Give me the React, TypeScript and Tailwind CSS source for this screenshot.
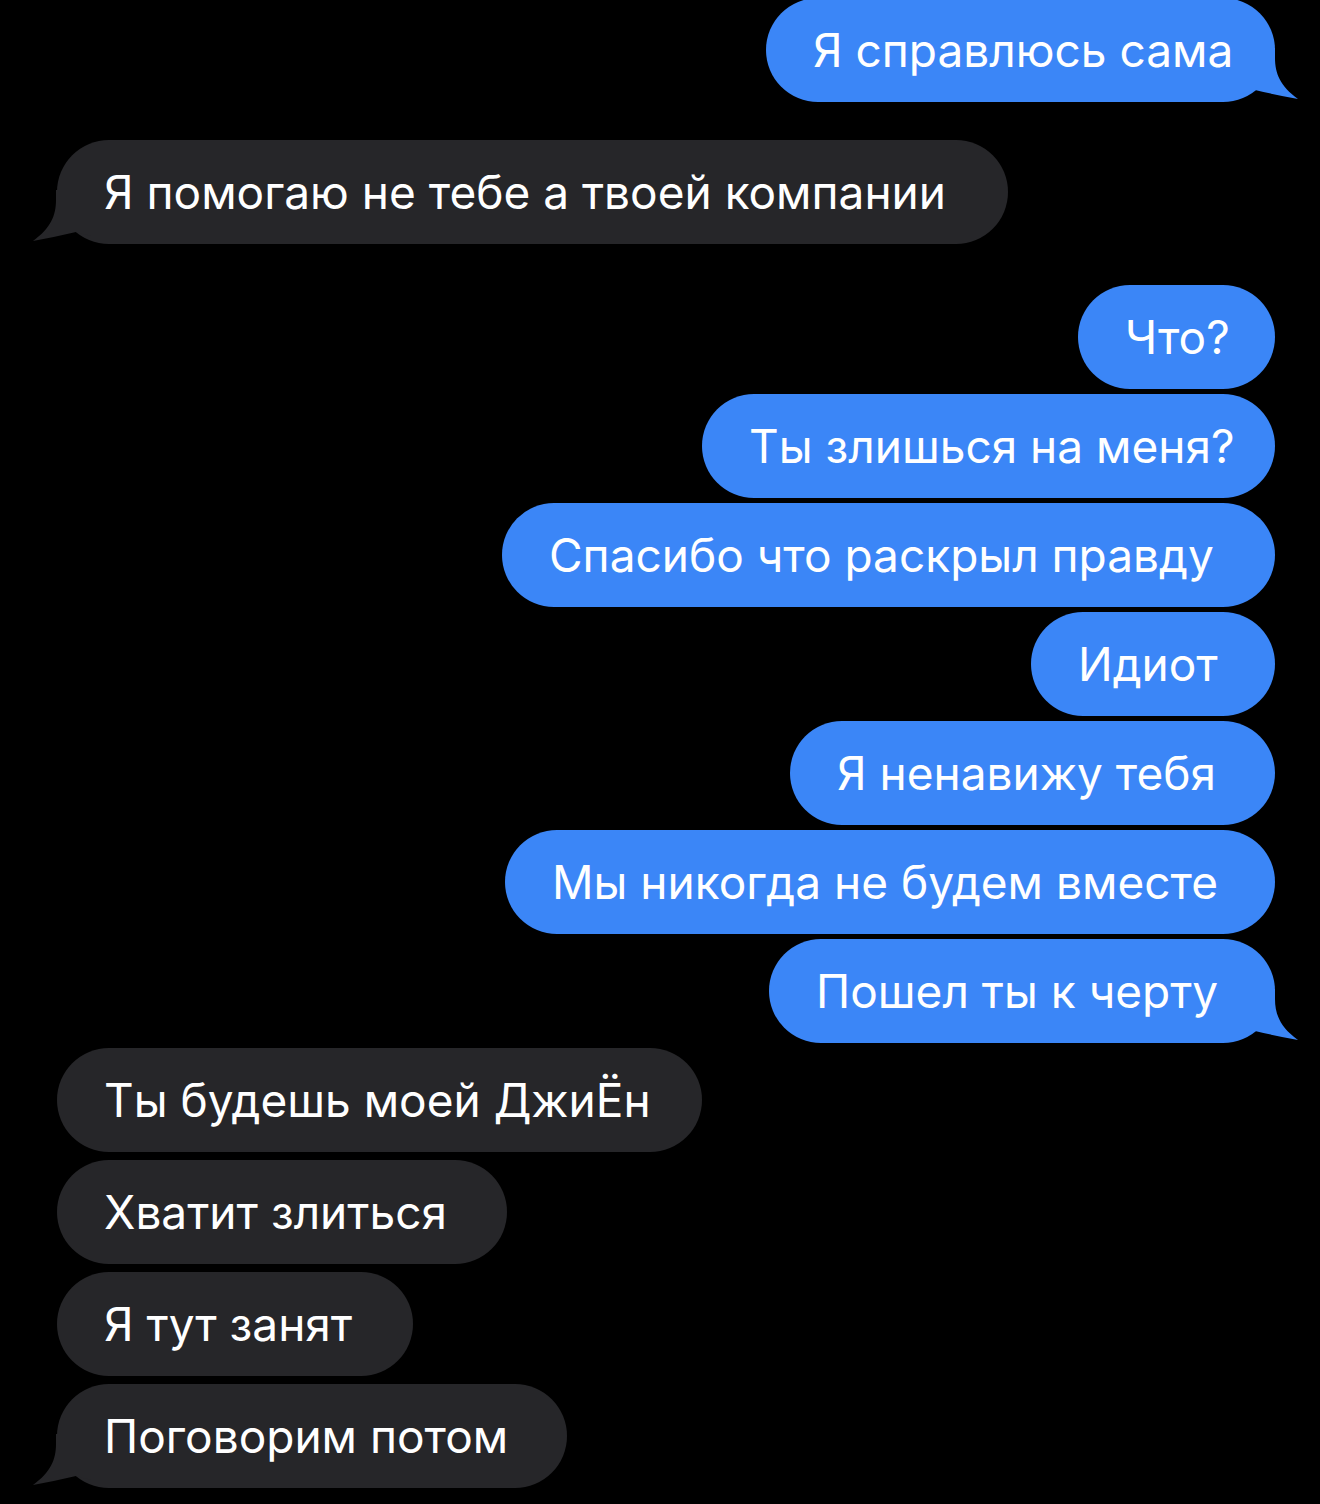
const BLUE = "#3b86f7"
const GRAY = "#262629"

type Msg = { text: string; w: number; mine: boolean; tail?: boolean; mt: number }

const messages: Msg[] = [
  { text: "Я справлюсь сама", w: 509, mine: true, tail: true, mt: -2 },
  { text: "Я помогаю не тебе а твоей компании", w: 951, mine: false, tail: true, mt: 38 },
  { text: "Что?", w: 197, mine: true, mt: 41 },
  { text: "Ты злишься на меня?", w: 573, mine: true, mt: 5 },
  { text: "Спасибо что раскрыл правду", w: 773, mine: true, mt: 5 },
  { text: "Идиот", w: 244, mine: true, mt: 5 },
  { text: "Я ненавижу тебя", w: 485, mine: true, mt: 5 },
  { text: "Мы никогда не будем вместе", w: 770, mine: true, mt: 5 },
  { text: "Пошел ты к черту", w: 506, mine: true, tail: true, mt: 5 },
  { text: "Ты будешь моей ДжиЁн", w: 645, mine: false, mt: 5 },
  { text: "Хватит злиться", w: 450, mine: false, mt: 8 },
  { text: "Я тут занят", w: 356, mine: false, mt: 8 },
  { text: "Поговорим потом", w: 510, mine: false, tail: true, mt: 8 },
]

// bubble tail, drawn over the bottom corner
function Tail({ mine }: { mine: boolean }) {
  if (mine) {
    return (
      <svg className="absolute right-[-25px] bottom-0 h-[54px] w-[60px]" viewBox="0 0 60 54">
        <path d="M0 0 L35 0 L35 10 C35 25 40 38 58 51 Q36 47 15 42 L0 46 Z" fill={BLUE} />
      </svg>
    )
  }
  return (
    <svg className="absolute left-[-26px] bottom-0 h-[54px] w-[60px]" viewBox="0 0 60 54">
      <path d="M60 0 L25 0 L25 10 C25 25 20 38 2 51 Q24 47 45 42 L60 46 Z" fill={GRAY} />
    </svg>
  )
}

function Bubble({ m }: { m: Msg }) {
  return (
    <div
      className={`flex ${m.mine ? "justify-end pr-[45px]" : "justify-start pl-[57px]"}`}
      style={{ marginTop: m.mt }}
    >
      <div
        className={`relative flex h-[104px] items-center rounded-[52px] pl-[47px] ${
          m.mine ? "bg-[#3b86f7]" : "bg-[#262629]"
        }`}
        style={{ width: m.w }}
      >
        {m.tail && <Tail mine={m.mine} />}
        <span className="relative whitespace-nowrap text-[46px] leading-none text-white">{m.text}</span>
      </div>
    </div>
  )
}

export default function App() {
  return (
    <div className="h-[1504px] w-[1320px] overflow-hidden bg-black font-['Inter',sans-serif]">
      {messages.map((m, i) => (
        <Bubble key={i} m={m} />
      ))}
    </div>
  )
}
